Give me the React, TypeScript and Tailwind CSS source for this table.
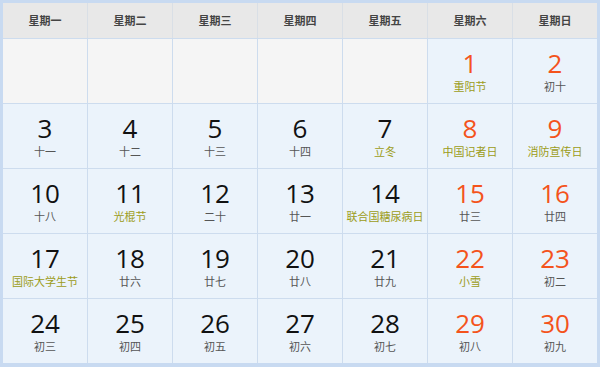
const weekDays = ["星期一", "星期二", "星期三", "星期四", "星期五", "星期六", "星期日"];

type Day = { n: number; sub: string; fest?: boolean } | null;

const days: Day[] = [
  null, null, null, null, null,
  { n: 1, sub: "重阳节", fest: true },
  { n: 2, sub: "初十" },
  { n: 3, sub: "十一" },
  { n: 4, sub: "十二" },
  { n: 5, sub: "十三" },
  { n: 6, sub: "十四" },
  { n: 7, sub: "立冬", fest: true },
  { n: 8, sub: "中国记者日", fest: true },
  { n: 9, sub: "消防宣传日", fest: true },
  { n: 10, sub: "十八" },
  { n: 11, sub: "光棍节", fest: true },
  { n: 12, sub: "二十" },
  { n: 13, sub: "廿一" },
  { n: 14, sub: "联合国糖尿病日", fest: true },
  { n: 15, sub: "廿三" },
  { n: 16, sub: "廿四" },
  { n: 17, sub: "国际大学生节", fest: true },
  { n: 18, sub: "廿六" },
  { n: 19, sub: "廿七" },
  { n: 20, sub: "廿八" },
  { n: 21, sub: "廿九" },
  { n: 22, sub: "小雪", fest: true },
  { n: 23, sub: "初二" },
  { n: 24, sub: "初三" },
  { n: 25, sub: "初四" },
  { n: 26, sub: "初五" },
  { n: 27, sub: "初六" },
  { n: 28, sub: "初七" },
  { n: 29, sub: "初八" },
  { n: 30, sub: "初九" },
];

export default function App() {
  return (
    <div
      className="w-[600px] h-[367px] bg-white"
      style={{ fontFamily: '"Open Sans", "Noto Sans CJK SC", sans-serif' }}
    >
      <div className="w-[600px] h-[367px] border-[3px] border-b-4 border-[#c8daf1] bg-[#cddcee]">
        {/* header */}
        <div className="grid grid-cols-[repeat(7,84px)] gap-x-px h-[35px] bg-[#d9dfe6]">
          {weekDays.map((w) => (
            <div
              key={w}
              className="bg-[#e8e8e8] flex items-center justify-center text-[11px] font-bold text-[#444]"
              style={{ fontFamily: '"Noto Sans CJK SC", sans-serif' }}
            >
              {w}
            </div>
          ))}
        </div>

        {/* days */}
        <div className="grid grid-cols-[repeat(7,84px)] grid-rows-[repeat(5,64px)] gap-px pt-px">
          {days.map((d, i) => {
            if (!d) return <div key={i} className="bg-[#f5f5f5]" />;
            const weekend = i % 7 >= 5;
            return (
              <div key={i} className="bg-[#ebf3fb] flex flex-col items-center justify-center gap-[3px] pt-px">
                <div
                  className={
                    "text-[26px] leading-[26px] " +
                    (weekend ? "text-[#f4531c]" : "text-[#111]")
                  }
                >
                  {d.n}
                </div>
                <div
                  className={
                    "text-[11px] leading-[14px] " +
                    (d.fest ? "text-[#9c9c18]" : "text-[#555]")
                  }
                  style={{ fontFamily: '"Noto Sans CJK SC", sans-serif' }}
                >
                  {d.sub}
                </div>
              </div>
            );
          })}
        </div>
      </div>
    </div>
  );
}
